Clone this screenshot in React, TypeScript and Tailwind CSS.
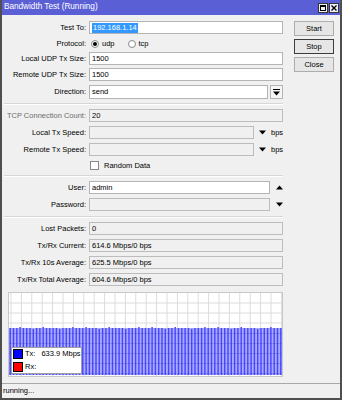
import React from "react";

const F = { fontFamily: '"Liberation Sans", Arial, sans-serif' };

function Label({ children, gray }: { children: React.ReactNode; gray?: boolean }) {
  return (
    <div className={`w-[84px] shrink-0 text-right pr-[0px] ${gray ? "text-[#6d6d6d]" : "text-black"}`}>{children}</div>
  );
}

function Box({ w, children, ro, sel }: { w: string; children?: React.ReactNode; ro?: boolean; sel?: boolean }) {
  return (
    <div
      className={`${w} h-[13px] border flex items-center px-[2px] leading-none overflow-hidden ${
        ro ? "bg-[#f0f0f0] border-[#bcbcbc]" : "bg-white border-[#b4b4b4]"
      }`}
    >
      {sel ? <span className="bg-[#3399ff] text-white px-[1px] h-[10px] flex items-center">{children}</span> : children}
    </div>
  );
}

function Tri({ up }: { up?: boolean }) {
  return (
    <svg width="7" height="5" viewBox="0 0 7 5" className="shrink-0">
      {up ? <polygon points="0,4.5 7,4.5 3.5,0.5" fill="#000" /> : <polygon points="0,0.5 7,0.5 3.5,4.5" fill="#000" />}
    </svg>
  );
}

function Radio({ on }: { on?: boolean }) {
  return (
    <div className="w-[8px] h-[8px] rounded-full border border-[#8a8a8a] bg-white flex items-center justify-center shrink-0">
      {on && <div className="w-[4px] h-[4px] rounded-full bg-black" />}
    </div>
  );
}

function Sep() {
  return <div className="ml-[2px] w-[279px] h-[2px] border-t border-[#d7d7d7] border-b border-b-white" />;
}

function Graph() {
  const bars: React.ReactNode[] = [];
  const tops = [35, 35, 35, 34, 35, 35, 35, 36, 35, 35, 34, 35, 35, 35, 35, 36, 35, 35, 35, 34];
  let i = 0;
  for (let x = 0.5; x < 273; x += 3.3) {
    const t = tops[i % tops.length];
    bars.push(<rect key={"d" + i} x={x} y={t} width={1.4} height={82 - t} fill="#4646ff" />);
    i++;
  }
  const grid: React.ReactNode[] = [];
  for (let x = 2; x < 275; x += 10.4) grid.push(<line key={"v" + x} x1={x} x2={x} y1={0} y2={85} stroke="#dcdcdc" strokeWidth={1} />);
  for (let y = 10; y < 85; y += 10) grid.push(<line key={"h" + y} x1={0} x2={275} y1={y} y2={y} stroke="#dcdcdc" strokeWidth={1} />);
  const gridOver: React.ReactNode[] = [];
  for (let y = 40; y < 82; y += 10)
    gridOver.push(<line key={"o" + y} x1={0} x2={274} y1={y + 0.5} y2={y + 0.5} stroke="#3030c0" strokeOpacity={0.25} strokeWidth={1} />);
  return (
    <div className="relative ml-[6px] mt-[6px] w-[275px] h-[85px] border border-[#c8c8c8] bg-white">
      <svg width="273" height="83" viewBox="0 0 273 83" className="block">
        {grid}
        <rect x={0} y={35} width={273} height={47} fill="#a9a9ff" />
        {bars}
        {gridOver}
      </svg>
      <div className="absolute left-[2px] top-[54px] w-[71px] h-[27px] bg-white border border-[#a0a0a0] flex flex-col justify-center gap-[2px] pl-[1px]">
        <div className="flex items-center h-[11px]">
          <div className="w-[10px] h-[10px] bg-[#0000ff] border border-black" />
          <span className="ml-[2px]">Tx:</span>
          <span className="ml-[6px]">633.9 Mbps</span>
        </div>
        <div className="flex items-center h-[11px]">
          <div className="w-[10px] h-[10px] bg-[#ff0000] border border-black" />
          <span className="ml-[2px]">Rx:</span>
        </div>
      </div>
    </div>
  );
}

function Btn({ children, focus }: { children: React.ReactNode; focus?: boolean }) {
  return (
    <div
      className={`w-[40px] h-[15px] flex items-center justify-center bg-[#e6e6e6] border ${
        focus ? "border-[#3c3c3c]" : "border-[#adadad]"
      }`}
    >
      {children}
    </div>
  );
}

export default function App() {
  return (
    <div
      style={F}
      className="w-[342px] h-[400px] bg-[#f0f0f0] border-x-2 border-b-2 border-[#4f4f4f] flex flex-col text-[7.5px] text-black leading-none overflow-hidden"
    >
      <div className="h-[15px] shrink-0 bg-[#5b5fd6] flex items-center justify-between -mx-[2px] pl-[4px] pr-[3px]">
        <span className="text-white text-[8.2px]">Bandwidth Test (Running)</span>
        <div className="flex gap-[1px]">
          <div className="w-[10px] h-[10px] bg-[#f0f0f0] border border-[#333] flex items-center justify-center">
            <div className="w-[6px] h-[6px] border border-black border-t-2" />
          </div>
          <div className="w-[10px] h-[10px] bg-[#f0f0f0] border border-[#333] flex items-center justify-center">
            <svg width="6" height="6" viewBox="0 0 6 6">
              <path d="M0.5 0.5 L5.5 5.5 M5.5 0.5 L0.5 5.5" stroke="#000" strokeWidth="1.4" />
            </svg>
          </div>
        </div>
      </div>
      <div className="flex flex-1">
        <div className="w-[288px] flex flex-col">
          <div className="flex items-center gap-[3px] mt-[6px]">
            <Label>Test To:</Label>
            <Box w="w-[194px]" sel>192.168.1.14</Box>
          </div>
          <div className="flex items-center gap-[3px] mt-[3px] h-[13px]">
            <Label>Protocol:</Label>
            <div className="flex items-center ml-[2px]">
              <Radio on />
              <span className="ml-[3px]">udp</span>
              <div className="ml-[13px]"><Radio /></div>
              <span className="ml-[3px]">tcp</span>
            </div>
          </div>
          <div className="flex items-center gap-[3px] mt-[2px]">
            <Label>Local UDP Tx Size:</Label>
            <Box w="w-[194px]">1500</Box>
          </div>
          <div className="flex items-center gap-[3px] mt-[3px]">
            <Label>Remote UDP Tx Size:</Label>
            <Box w="w-[194px]">1500</Box>
          </div>
          <div className="flex items-center gap-[3px] mt-[4px]">
            <Label>Direction:</Label>
            <div className="w-[179px] h-[14px] border border-[#b4b4b4] bg-white flex items-center px-[2px]">send</div>
            <div className="w-[13px] h-[14px] border border-[#b4b4b4] bg-[#f5f5f5] flex flex-col items-center justify-center ml-[-1px]">
              <div className="w-[7px] h-[1px] bg-black mb-[1px]" />
              <Tri />
            </div>
          </div>
          <div className="mt-[4px]"><Sep /></div>
          <div className="flex items-center gap-[3px] mt-[4px]">
            <Label gray>TCP Connection Count:</Label>
            <Box w="w-[194px]" ro>20</Box>
          </div>
          <div className="flex items-center gap-[3px] mt-[4px]">
            <Label>Local Tx Speed:</Label>
            <Box w="w-[165px]" ro />
            <div className="ml-[2px]"><Tri /></div>
            <span className="ml-[2px]">bps</span>
          </div>
          <div className="flex items-center gap-[3px] mt-[4px]">
            <Label>Remote Tx Speed:</Label>
            <Box w="w-[165px]" ro />
            <div className="ml-[2px]"><Tri /></div>
            <span className="ml-[2px]">bps</span>
          </div>
          <div className="flex items-center mt-[4px] h-[11px] ml-[88px]">
            <div className="w-[9px] h-[9px] border border-[#8a8a8a] bg-white" />
            <span className="ml-[5px]">Random Data</span>
          </div>
          <div className="mt-[4px]"><Sep /></div>
          <div className="flex items-center gap-[3px] mt-[4px]">
            <Label>User:</Label>
            <Box w="w-[181px]">admin</Box>
            <div className="ml-[3px]"><Tri up /></div>
          </div>
          <div className="flex items-center gap-[3px] mt-[4px]">
            <Label>Password:</Label>
            <Box w="w-[181px]" ro />
            <div className="ml-[3px]"><Tri /></div>
          </div>
          <div className="mt-[5px]"><Sep /></div>
          <div className="flex items-center gap-[3px] mt-[4px]">
            <Label>Lost Packets:</Label>
            <Box w="w-[194px]" ro>0</Box>
          </div>
          <div className="flex items-center gap-[3px] mt-[4px]">
            <Label>Tx/Rx Current:</Label>
            <Box w="w-[194px]" ro>614.6 Mbps/0 bps</Box>
          </div>
          <div className="flex items-center gap-[3px] mt-[4px]">
            <Label>Tx/Rx 10s Average:</Label>
            <Box w="w-[194px]" ro>625.5 Mbps/0 bps</Box>
          </div>
          <div className="flex items-center gap-[3px] mt-[4px]">
            <Label>Tx/Rx Total Average:</Label>
            <Box w="w-[194px]" ro>604.6 Mbps/0 bps</Box>
          </div>
          <Graph />
        </div>
        <div className="flex flex-col gap-[3px] mt-[6px] ml-[4px]">
          <Btn>Start</Btn>
          <Btn focus>Stop</Btn>
          <Btn>Close</Btn>
        </div>
      </div>
      <div className="h-[15px] shrink-0 border-t border-[#a8a8a8] flex items-center pl-[1px] mt-[1px]">running...</div>
    </div>
  );
}
